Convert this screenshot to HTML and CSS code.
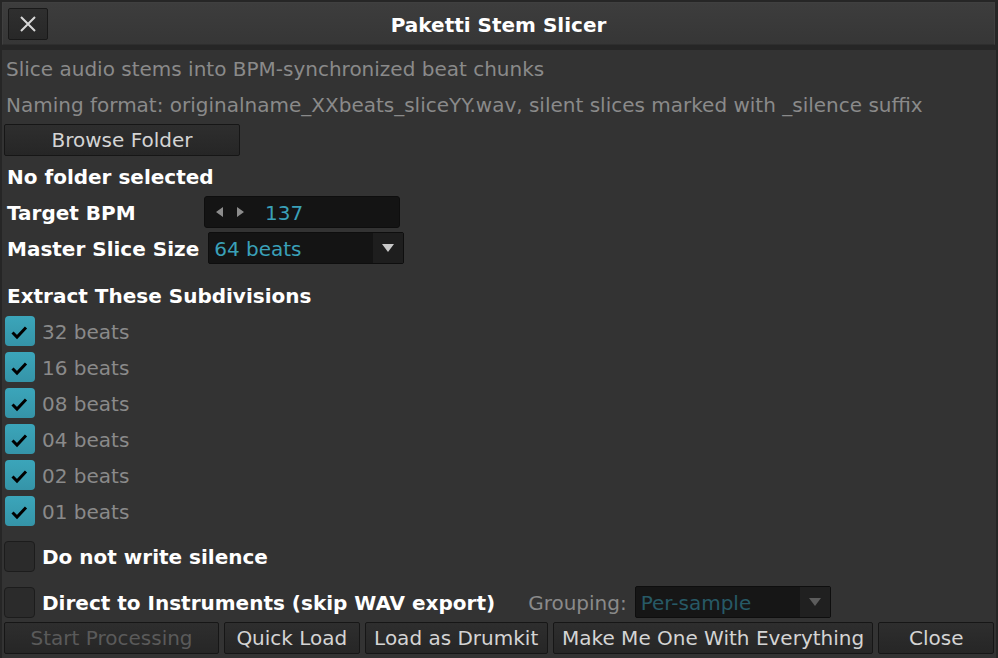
FILE: index.html
```html
<!DOCTYPE html>
<html lang="en">
<head>
    <meta charset="UTF-8">
    <title>Paketti Stem Slicer</title>
    <link rel="stylesheet" href="styles.css">
</head>
<body>

<div class="window">
    <div class="titlebar">
        <button class="close-x" aria-label="Close">
            <svg width="18" height="18" viewBox="0 0 18 18"><path d="M2 2 L16 16 M16 2 L2 16" stroke="#d8d8d8" stroke-width="2"/></svg>
        </button>
        <h1>Paketti Stem Slicer</h1>
    </div>

    <div class="content">
        <div class="row"><span class="info">Slice audio stems into BPM-synchronized beat chunks</span></div>
        <div class="row"><span class="info">Naming format: originalname_XXbeats_sliceYY.wav, silent slices marked with _silence suffix</span></div>
        <div class="row"><button class="btn browse">Browse Folder</button></div>
        <div class="row"><span class="label">No folder selected</span></div>

        <div class="row">
            <span class="label bpm-label">Target BPM</span>
            <div class="valuebox">
                <svg class="arrows" width="30" height="10" viewBox="0 0 30 10">
                    <path d="M7 0 L0 5 L7 10 Z M21 0 L28 5 L21 10 Z" fill="#8c8c8c"/>
                </svg>
                <span class="value">137</span>
            </div>
        </div>

        <div class="row">
            <span class="label">Master Slice Size</span>
            <div class="popup">
                <span class="value">64 beats</span>
                <span class="popup-arrow"><svg width="12" height="8" viewBox="0 0 12 8"><path d="M0 0 L12 0 L6 8 Z" fill="#c8c8c8"/></svg></span>
            </div>
        </div>

        <div class="row section"><span class="label">Extract These Subdivisions</span></div>

        <div class="checks">
            <label class="row check-row"><span class="checkbox on"><svg width="30" height="30" viewBox="0 0 30 30"><path d="M7.5 16.5 L12 21 L21 11.5" fill="none" stroke="#000" stroke-width="3"/></svg></span><span class="check-text">32 beats</span></label>
            <label class="row check-row"><span class="checkbox on"><svg width="30" height="30" viewBox="0 0 30 30"><path d="M7.5 16.5 L12 21 L21 11.5" fill="none" stroke="#000" stroke-width="3"/></svg></span><span class="check-text">16 beats</span></label>
            <label class="row check-row"><span class="checkbox on"><svg width="30" height="30" viewBox="0 0 30 30"><path d="M7.5 16.5 L12 21 L21 11.5" fill="none" stroke="#000" stroke-width="3"/></svg></span><span class="check-text">08 beats</span></label>
            <label class="row check-row"><span class="checkbox on"><svg width="30" height="30" viewBox="0 0 30 30"><path d="M7.5 16.5 L12 21 L21 11.5" fill="none" stroke="#000" stroke-width="3"/></svg></span><span class="check-text">04 beats</span></label>
            <label class="row check-row"><span class="checkbox on"><svg width="30" height="30" viewBox="0 0 30 30"><path d="M7.5 16.5 L12 21 L21 11.5" fill="none" stroke="#000" stroke-width="3"/></svg></span><span class="check-text">02 beats</span></label>
            <label class="row check-row"><span class="checkbox on"><svg width="30" height="30" viewBox="0 0 30 30"><path d="M7.5 16.5 L12 21 L21 11.5" fill="none" stroke="#000" stroke-width="3"/></svg></span><span class="check-text">01 beats</span></label>
        </div>

        <label class="row option silence"><span class="checkbox"></span><span class="label">Do not write silence</span></label>

        <div class="row option direct">
            <span class="checkbox"></span>
            <span class="label">Direct to Instruments (skip WAV export)</span>
            <span class="info grouping">Grouping:</span>
            <div class="popup dim">
                <span class="value">Per-sample</span>
                <span class="popup-arrow"><svg width="12" height="8" viewBox="0 0 12 8"><path d="M0 0 L12 0 L6 8 Z" fill="#5c5c5c"/></svg></span>
            </div>
        </div>

        <div class="row buttons">
            <button class="btn disabled start">Start Processing</button>
            <button class="btn quick">Quick Load</button>
            <button class="btn drumkit">Load as Drumkit</button>
            <button class="btn everything">Make Me One With Everything</button>
            <button class="btn close">Close</button>
        </div>
    </div>
</div>

</body>
</html>
```

FILE: styles.css
```css
body {
    margin: 0;
    background-color: #262626;
    font-family: "DejaVu Sans", Verdana, sans-serif;
    font-size: 20px;
}

.window {
    width: 998px;
    height: 658px;
    box-sizing: border-box;
    padding: 2px 2px 0 2px;
    display: flex;
    flex-direction: column;
}

.titlebar {
    height: 43px;
    box-sizing: border-box;
    background: linear-gradient(#3d3d3d, #363636);
    border: 1px solid #404040;
    border-bottom-color: #2e2e2e;
    display: flex;
    align-items: center;
    margin-right: 1px;
}

.close-x {
    width: 40px;
    height: 32px;
    margin-left: 5px;
    background: linear-gradient(#2f2f2f, #282828);
    border: 1px solid #191919;
    border-radius: 2px;
    padding: 0;
    display: flex;
    align-items: center;
    justify-content: center;
}

.titlebar h1 {
    flex: 1;
    margin: 0 45px 0 0;
    padding-top: 2px;
    text-align: center;
    color: #ffffff;
    font-size: 20px;
    font-weight: bold;
}

.content {
    flex: 1;
    margin-top: 5px;
    background-color: #333333;
    padding: 2px 2px 0 2px;
    display: flex;
    flex-direction: column;
    gap: 4px;
}

.row {
    height: 32px;
    display: flex;
    align-items: center;
    white-space: nowrap;
}

.info {
    color: #8a8a8a;
    padding-left: 2px;
    padding-top: 2px;
}

.label {
    color: #ffffff;
    font-weight: bold;
    padding-left: 3px;
    padding-top: 2px;
}

.btn {
    height: 32px;
    box-sizing: border-box;
    background: linear-gradient(#2e2e2e, #262626);
    border: 1px solid #161616;
    border-radius: 2px;
    color: #d4d4d4;
    font-family: inherit;
    font-size: 20px;
    padding: 0;
}

.browse {
    width: 236px;
}

.bpm-label {
    width: 197px;
}

.valuebox {
    width: 196px;
    height: 32px;
    box-sizing: border-box;
    background-color: #141414;
    border: 1px solid #0e0e0e;
    border-radius: 3px;
    display: flex;
    align-items: center;
}

.arrows {
    margin-left: 11px;
}

.value {
    color: #3aa0b8;
    padding-top: 2px;
}

.valuebox .value {
    margin-left: 19px;
}

.popup {
    width: 196px;
    height: 32px;
    box-sizing: border-box;
    margin-left: 9px;
    background-color: #141414;
    border: 1px solid #0e0e0e;
    border-radius: 2px;
    display: flex;
    align-items: center;
}

.popup .value {
    flex: 1;
    padding-left: 5px;
}

.popup-arrow {
    width: 30px;
    height: 100%;
    background-color: #1e1e1e;
    display: flex;
    align-items: center;
    justify-content: center;
}

.section {
    margin-top: 11px;
}

.checks {
    display: flex;
    flex-direction: column;
    gap: 4px;
}

.checkbox {
    width: 31px;
    height: 31px;
    box-sizing: border-box;
    border-radius: 4px;
    background-color: #2b2b2b;
    border: 1px solid #1c1c1c;
    display: block;
    flex-shrink: 0;
}

.checkbox.on {
    width: 30px;
    height: 30px;
    margin-left: 1px;
    background: linear-gradient(#3ba5ba, #3594a8);
    border: none;
}

.check-text {
    color: #8a8a8a;
    padding-left: 7px;
    padding-top: 2px;
}

.option .label {
    padding-left: 7px;
}

.silence {
    margin-top: 9px;
}

.direct {
    margin-top: 10px;
}

.grouping {
    margin-left: 31px;
}

.popup.dim {
    margin-left: 8px;
    background-color: #161616;
}

.popup.dim .value {
    color: #275a66;
}

.popup.dim .popup-arrow {
    background-color: #202020;
}

.buttons {
    gap: 5px;
}

.disabled {
    color: #5a5a5a;
}

.start {
    width: 216px;
}

.quick {
    width: 136px;
}

.drumkit {
    width: 184px;
}

.everything {
    width: 322px;
}

.close {
    width: 116px;
}
```
